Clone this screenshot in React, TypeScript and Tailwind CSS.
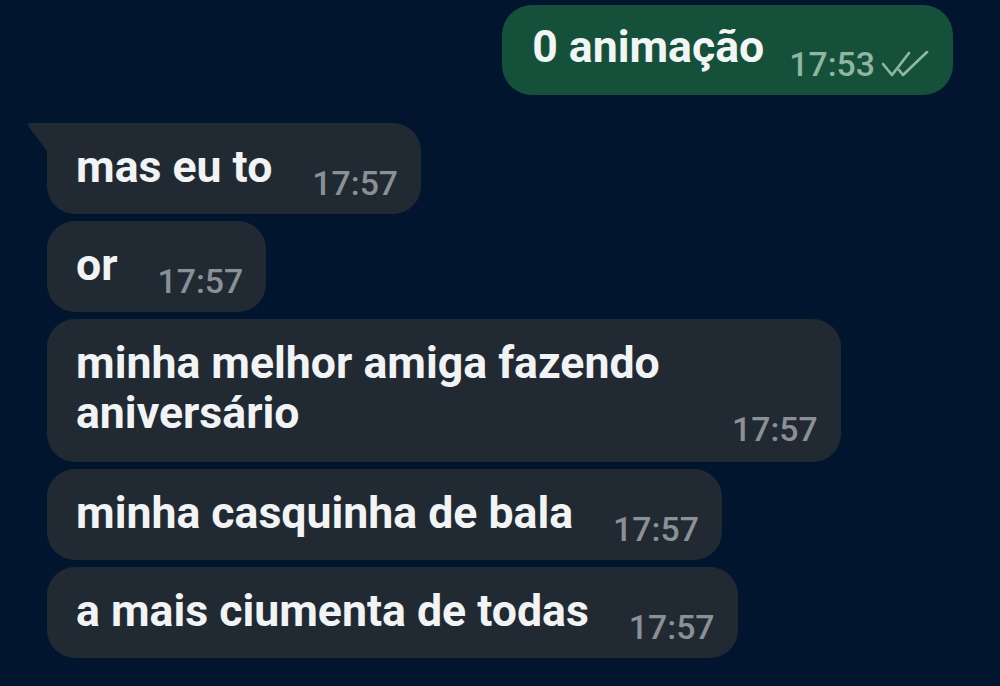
import React from "react";

const font = { fontFamily: "Roboto, 'Noto Sans', sans-serif" };

function Incoming({ text, time, tail, textW, pb }: { text: React.ReactNode; time: string; tail?: boolean; textW?: string; pb?: string }) {
  return (
    <div className="relative flex">
      {tail && (
        <svg className="absolute left-[-21px] top-0" width="24" height="30" viewBox="0 0 24 30">
          <path d="M21 0 L4 0 Q0 0 2.5 3.5 L21 28 Z" fill="#212a33" />
        </svg>
      )}
      <div
        className={`flex items-end bg-[#212a33] rounded-[28px] ${tail ? "rounded-tl-none" : ""} pl-[29px] pr-[23px] pt-[19px] ${pb ?? "pb-[11px]"}`}
      >
        <div className={`text-[44.6px] leading-[50px] font-bold text-[#f1f3f4] mb-[11px] ${textW ?? ""}`}>{text}</div>
        <div className="ml-[40px] text-[33.8px] leading-[38px] font-medium text-[#8a9096]">{time}</div>
      </div>
    </div>
  );
}

export default function App() {
  return (
    <div className="w-[1000px] h-[686px] bg-[#02152f] overflow-hidden pt-[5px] pl-[47px] pr-[48px]" style={font}>
      <div className="flex justify-end -mr-[1px]">
        <div className="flex items-end bg-[#15503a] rounded-[30px] pl-[30px] pr-[24px] pt-[17px] pb-[11px]">
          <div className="text-[44.6px] leading-[50px] font-bold text-[#f1f5f3] mb-[12px]">0 animação</div>
          <div className="ml-[25px] text-[33.8px] leading-[38px] font-medium text-[#8fb6a3] flex items-center">
            <span>17:53</span>
            <svg className="ml-[6px] mb-[2px]" width="48" height="26" viewBox="0 0 48 26" fill="none">
              <path d="M2 13 L11 24 L28 2" stroke="#8fb6a3" strokeWidth="2.7" strokeLinecap="round" strokeLinejoin="round" />
              <path d="M18 19 L22 24 L46 1" stroke="#8fb6a3" strokeWidth="2.7" strokeLinecap="round" strokeLinejoin="round" />
            </svg>
          </div>
        </div>
      </div>
      <div className="mt-[28px] flex flex-col items-start gap-[7px]">
        <Incoming tail text="mas eu to" time="17:57" />
        <Incoming text="or" time="17:57" />
        <Incoming
          text={<>minha melhor amiga fazendo<br />aniversário</>}
          time="17:57"
          textW="w-[616px]"
          pb="pb-[13px]"
        />
        <Incoming text="minha casquinha de bala" time="17:57" />
        <Incoming text="a mais ciumenta de todas" time="17:57" />
      </div>
    </div>
  );
}
